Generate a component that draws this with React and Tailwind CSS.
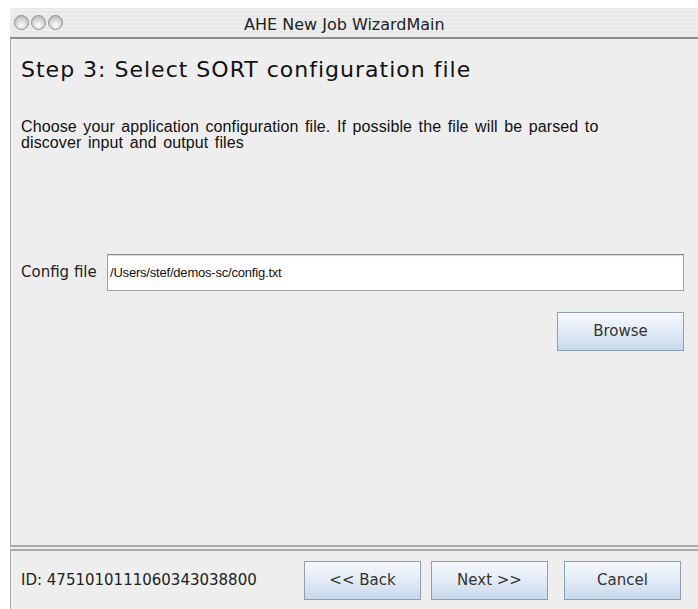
import React from 'react';

const lucida = { fontFamily: '"DejaVu Sans", sans-serif' };
const helv = { fontFamily: '"Liberation Sans", Arial, sans-serif' };

const WizardButton = ({ label, className = '' }) => (
  <button
    className={`h-[39px] w-[117px] border border-[#8d9fb2] bg-gradient-to-b from-[#f5f8fc] via-[#e2ebf5] to-[#c6d8eb] text-[15px] text-[#333] ${className}`}
    style={lucida}
  >
    {label}
  </button>
);

const TrafficLight = () => (
  <span className="h-[15px] w-[15px] rounded-full border border-[#8e8e8e] bg-[radial-gradient(circle_at_50%_70%,#ffffff_0%,#d9d9d9_45%,#a9a9a9_100%)]" />
);

export default function App() {
  return (
    <div className="h-[609px] w-[698px] overflow-hidden bg-white">
      <div className="ml-[10px] mt-[8px] flex h-[601px] w-[700px] flex-col bg-[#eeeeee]">
        {/* title bar */}
        <div className="relative flex h-[31px] items-center rounded-tl-[9px] border-b-2 border-[#8f8f8f] bg-[repeating-linear-gradient(0deg,#e8e8e8_0px,#e8e8e8_2px,#eeeeee_2px,#eeeeee_4px)]">
          <div className="flex gap-[2px] pl-[4px]">
            <TrafficLight />
            <TrafficLight />
            <TrafficLight />
          </div>
          <span
            className="absolute left-[234px] top-[5px] text-[16px] text-[#222]"
            style={lucida}
          >
            AHE New Job WizardMain
          </span>
        </div>

        {/* step panel */}
        <div className="flex h-[508px] flex-col border-b-2 border-l border-[#a9a9a9] pl-[10px]">
          <h1
            className="mt-[18px] text-[22px] leading-[26px] tracking-[1px] text-[#111]"
            style={lucida}
          >
            Step 3: Select SORT configuration file
          </h1>
          <p
            className="mt-[36px] w-[660px] text-[16px] leading-[16px] tracking-[0.1px] [word-spacing:2px] text-[#111]"
            style={helv}
          >
            Choose your application configuration file. If possible the file will be parsed to
            <br />
            discover input and output files
          </p>

          <div className="mt-[103px] flex items-center">
            <span className="w-[86px] text-[15px] text-[#222]" style={lucida}>
              Config file
            </span>
            <div className="flex h-[37px] w-[577px] items-center border border-[#a0a0a0] border-t-[#8a8a8a] bg-white pl-[2px] shadow-[inset_0_1px_1px_rgba(0,0,0,0.15)]">
              <span className="text-[13px] tracking-[-0.2px] text-[#111]" style={helv}>
                /Users/stef/demos-sc/config.txt
              </span>
            </div>
          </div>

          <div className="mt-[21px] flex w-[663px] justify-end">
            <WizardButton label="Browse" className="w-[127px]" />
          </div>
        </div>

        {/* footer */}
        <div className="mt-[2px] flex flex-1 items-center border-l border-t-2 border-[#a9a9a9] pl-[10px]">
          <span className="w-[283px] text-[15px] text-[#222]" style={lucida}>
            ID: 4751010111060343038800
          </span>
          <WizardButton label="<< Back" />
          <WizardButton label="Next >>" className="ml-[10px]" />
          <WizardButton label="Cancel" className="ml-[16px]" />
        </div>
      </div>
    </div>
  );
}
